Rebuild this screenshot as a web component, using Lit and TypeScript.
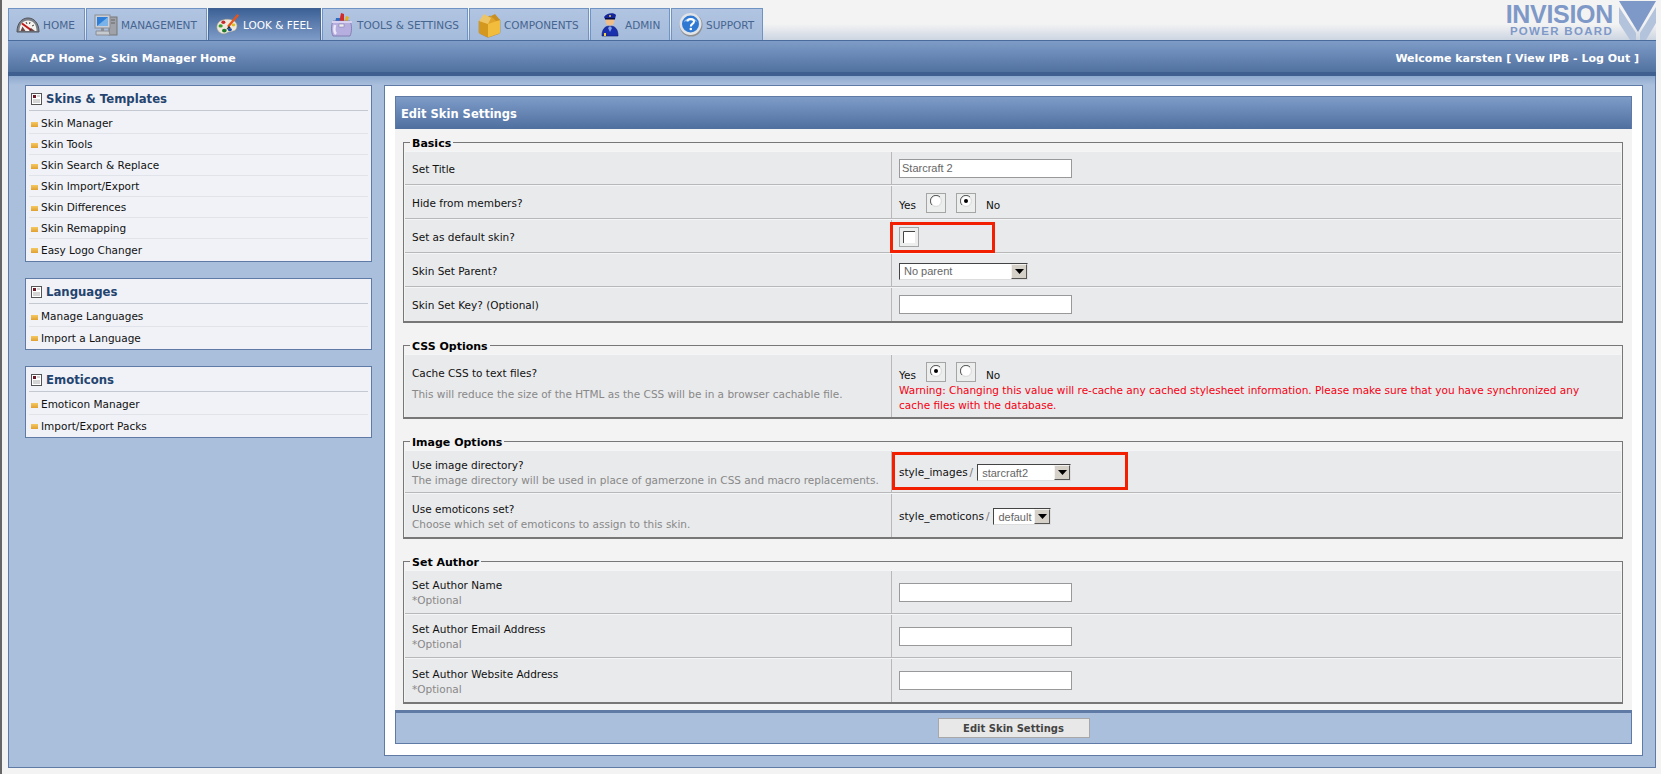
import { LitElement, html, css, svg } from "lit";
import { customElement } from "lit/decorators.js";

const ICONS: Record<string, unknown> = {
  home: svg`<svg width="24" height="24" viewBox="0 0 24 24">
    <path d="M1 19 C1 10 6 5 12 5 C18 5 23 10 23 19 Z" fill="#7d818a" stroke="#50535b"/>
    <path d="M3.500 18 C3.500 11 7 7.500 12 7.500 C17 7.500 20.500 11 20.500 18 Z" fill="#f6f3ee"/>
    <path d="M6 10.500 L15 17" stroke="#c01818" stroke-width="2"/>
    <path d="M10 9 L11 11 M14 9 L13.500 11 M18 12 L16 13" stroke="#444" stroke-width="1"/>
    <path d="M13 18 L15 15 L19 18 Z M4.500 18 L6.500 13.500 L9.500 18 Z" fill="#4a2024" opacity=".8"/>
  </svg>`,
  management: svg`<svg width="24" height="24" viewBox="0 0 24 24">
    <rect x="15" y="4" width="8" height="18" fill="#9fa2a9" stroke="#777"/>
    <path d="M17 7 H21 M17 10 H21" stroke="#666"/>
    <rect x="1" y="2" width="15" height="13" fill="#ccd0d6" stroke="#8a8d94"/>
    <rect x="3" y="4" width="11" height="9" fill="#2f7ed8"/>
    <path d="M3 13 L14 4 V13 Z" fill="#79b3ea"/>
    <path d="M2 18 H15 L16 22 H2 Z" fill="#c6c9ce" stroke="#8a8d94"/>
    <rect x="7" y="15" width="3" height="3" fill="#8a8d94"/>
  </svg>`,
  look: svg`<svg width="26" height="26" viewBox="0 0 26 26">
    <path d="M1 14 C2 8 9 6 15 7 C22 8 24 13 22 17 C20 21 14 19 11 22 C7 24 0 20 1 14 Z" fill="#efe9dd" stroke="#a49c8a" stroke-width=".6"/>
    <ellipse cx="5" cy="14" rx="2.300" ry="1.800" fill="#3a9a2a"/>
    <ellipse cx="9" cy="19" rx="2.500" ry="2" fill="#1d7a2c"/>
    <ellipse cx="15" cy="18" rx="2.300" ry="1.800" fill="#1b4ea8"/>
    <ellipse cx="19" cy="13" rx="2" ry="1.600" fill="#d9c02a"/>
    <ellipse cx="8" cy="10" rx="2.200" ry="1.800" fill="#c9282a"/>
    <path d="M13 15 L24 2" stroke="#e8531a" stroke-width="2.500"/>
    <path d="M11 18 L14 14 L16 16 Z" fill="#233"/>
  </svg>`,
  tools: svg`<svg width="24" height="26" viewBox="0 0 24 26">
    <path d="M9 11 L11 1 L14 2 L14 11 Z" fill="#d12a2a"/>
    <path d="M14 11 L16 4 L19 5 L17 11 Z" fill="#e2b31f"/>
    <path d="M5 11 L6 6 H10 V11 Z" fill="#2f6bc0"/>
    <path d="M3 9 C1 13 1 20 3 24 H20 C22 20 22 13 20 9 Z" fill="#b7aee0" stroke="#7a72a8" stroke-width=".8"/>
    <path d="M2 10 H22" stroke="#d8d2f0" stroke-width="2"/>
    <path d="M5 13 C4 17 4 20 6 22" stroke="#ece8f8" stroke-width="2.500" fill="none"/>
    <rect x="9" y="12" width="5" height="3" fill="#eee" stroke="#7a72a8" stroke-width=".5"/>
  </svg>`,
  components: svg`<svg width="24" height="26" viewBox="0 0 24 26">
    <path d="M2 9 L13 4 L23 8 V20 Q23 21 22 21.500 L12 25 Q11 25.500 10 25 L3 21.500 Q2 21 2 20 Z" fill="#e0a42a" stroke="#a87818" stroke-width=".5"/>
    <path d="M11 12 L23 8 V20 Q23 21 22 21.500 L12 25 L11 25 Z" fill="#f2bd3c"/>
    <path d="M2 9 L11 12 V25 L3 21.500 Q2 21 2 20 Z" fill="#d4981f"/>
    <path d="M2 9 L7 2 L14 6 L11 12 Z" fill="#edc566"/>
    <path d="M14 4 L18 2 L23 8 L19 9 Z" fill="#c98f20"/>
  </svg>`,
  admin: svg`<svg width="20" height="25" viewBox="0 0 20 25">
    <path d="M2 24 C2 17 5 14 10 14 C15 14 18 17 18 24 Z" fill="#1a2fae" stroke="#0c1868" stroke-width=".6"/>
    <circle cx="10" cy="9" r="4.500" fill="#eebd8c"/>
    <path d="M10 14 L8 16 L10 20 L12 16 Z" fill="#7fa0e8"/>
    <path d="M4 5 C6 1 14 0 16 3 L15 7 H5 Z" fill="#16249a"/>
    <rect x="5" y="6" width="10" height="1.500" fill="#050a40"/>
    <circle cx="10" cy="4" r="1" fill="#f0d040"/>
    <rect x="4" y="21" width="2" height="3" fill="#f0d040"/>
  </svg>`,
  support: svg`<svg width="24" height="25" viewBox="0 0 24 25">
    <circle cx="12" cy="13" r="11.500" fill="#8f8f8f"/>
    <circle cx="11.500" cy="12" r="11" fill="#e0e4e8"/>
    <circle cx="11.500" cy="12" r="8.500" fill="#2f79d2"/>
    <path d="M5 10 C6 5 17 5 18 10 C14 8 9 8 5 10 Z" fill="#8abcf0"/>
    <path d="M8.500 9.500 C8.500 6 15 6 15 9.500 C15 12 11.800 11.800 11.800 14.500" fill="none" stroke="#fff" stroke-width="2"/>
    <circle cx="11.800" cy="17" r="1.300" fill="#fff"/>
  </svg>`,
};

const TABS = [
  { key: "home", label: "HOME", width: 77 },
  { key: "management", label: "MANAGEMENT", width: 121 },
  { key: "look", label: "LOOK & FEEL", width: 113, active: true },
  { key: "tools", label: "TOOLS & SETTINGS", width: 146 },
  { key: "components", label: "COMPONENTS", width: 120 },
  { key: "admin", label: "ADMIN", width: 80 },
  { key: "support", label: "SUPPORT", width: 92 },
];

const MENU = [
  { title: "Skins & Templates", items: ["Skin Manager", "Skin Tools", "Skin Search & Replace", "Skin Import/Export", "Skin Differences", "Skin Remapping", "Easy Logo Changer"] },
  { title: "Languages", items: ["Manage Languages", "Import a Language"] },
  { title: "Emoticons", items: ["Emoticon Manager", "Import/Export Packs"] },
];

@customElement("app-root")
export class AppRoot extends LitElement {
  static styles = css`
    :host {
      display: block;
      box-sizing: border-box;
      height: 774px;
      background: #f3f3f3;
      border-left: 2px solid #666;
      padding: 8px 5px 0 6px;
      font-family: "DejaVu Sans", Verdana, sans-serif;
      font-size: 10.5px;
      color: #111;
      overflow: hidden;
    }
    * { box-sizing: border-box; }

    .top {
      display: flex;
      justify-content: space-between;
      height: 33px;
      border-bottom: 1px solid #4a6c9c;
      background: linear-gradient(#f3f3f3 50%, #ccd5e2);
    }
    .tabs { display: flex; gap: 1px; }
    .tab {
      display: flex;
      align-items: center;
      gap: 3px;
      height: 32px;
      padding-left: 7px;
      font-size: 10.5px;
      color: #46658f;
      background: linear-gradient(#b1c5e2, #a5bbdb);
      border: 1px solid #6f93c2;
      border-bottom: 0;
      white-space: nowrap;
    }
    .tab.active {
      color: #fff;
      background: linear-gradient(#3f6398, #7f9cc8);
      border-color: #4a6c9c;
      border-top: 2px solid #3d5f92;
    }
    .tab-icon { display: flex; align-items: center; justify-content: center; width: 24px; flex: none; }

    .logo { display: flex; height: 32px; margin-top: -8px; gap: 6px; }
    .logo-text { display: flex; flex-direction: column; align-items: flex-end; font-family: "Liberation Sans", Arial, sans-serif; font-weight: 700; color: #7e99c8; }
    .logo-big { font-size: 25px; line-height: 29px; letter-spacing: -.3px; }
    .logo-small { font-size: 11.500px; line-height: 13px; letter-spacing: 1.3px; margin-top: -3.600px; }
    .logo svg { display: block; margin-top: 1px; }

    .bar {
      display: flex;
      justify-content: space-between;
      align-items: center;
      height: 35px;
      padding: 0 17px 0 22px;
      background: linear-gradient(#7f9cc8, #51719f 88%, #3f5f90 88%, #3f5f90);
      color: #fff;
      font-weight: 700;
      font-size: 11px;
    }

    .content {
      display: grid;
      grid-template-columns: 347px 1fr;
      gap: 12px;
      align-items: start;
      padding: 9px 12px 12px 16px;
      height: 692px;
      background: linear-gradient(#8ea9cf, #aabfdc 9px);
      border: 1px solid #5f7ba5;
      border-top: 0;
    }

    .side { display: flex; flex-direction: column; gap: 16px; }
    .box { background: #f0f2f7; border: 1px solid #5f7ba5; padding: 0 3px 1px; }
    .box-title {
      display: flex;
      align-items: center;
      gap: 4px;
      height: 25px;
      margin-bottom: 2px;
      padding: 2px 0 0 2px;
      border-bottom: 1px solid #c4c8d0;
      font-weight: 700;
      font-size: 11.7px;
      color: #24446f;
    }
    .box-item {
      display: flex;
      align-items: center;
      gap: 3px;
      height: 21px;
      padding-left: 2px;
      border-bottom: 1px solid #e0e3e9;
      color: #111;
    }
    .box-item:last-child { border-bottom: 0; }
    .bullet { width: 7px; height: 5px; margin-top: 2px; background: linear-gradient(#f4c860, #e0a030); }

    .main { background: #fff; border: 1px solid #5f7ba5; height: 671px; padding: 10px; }
    .panel { background: #f3f3f3; height: 648px; display: flex; flex-direction: column; }
    .panel-head {
      flex: none;
      height: 33px;
      display: flex;
      align-items: center;
      padding: 2px 0 0 5px;
      font-size: 11.500px;
      font-weight: 700;
      color: #fff;
      background: linear-gradient(#7f9cc8, #4f6f9f);
      border: 1px solid #5f7ba5;
      border-bottom: 0;
    }
    .panel-body { flex: 1; padding: 6px 9px 0 8px; display: flex; flex-direction: column; gap: 15px; }

    fieldset {
      margin: 0;
      padding: 2px 1px 0;
      border: 1px solid #777;
      border-bottom: 2px solid #777;
      min-width: 0;
    }
    legend {
      margin-left: 5px;
      padding: 0 2px;
      height: 14px;
      line-height: 18px;
      font-weight: 700;
      font-size: 11px;
      color: #000;
    }
    .row {
      display: grid;
      grid-template-columns: 486px 1fr;
      background: #e9eaec;
      border-top: 1px solid #f4f5f6;
      border-bottom: 1px solid #b8b8b8;
    }
    .row:last-child { border-bottom: 0; }
    .cell-l { padding: 2px 7px 0; display: flex; flex-direction: column; justify-content: center; line-height: 15px; }
    .cell-r { position: relative; padding: 2px 7px 0; border-left: 1px solid #b8b8b8; display: flex; flex-direction: column; justify-content: center; line-height: 15px; }
    .sub { color: #888; }
    .warn { color: #f40012; padding-right: 30px; }

    .single { height: 34px; }
    .double { height: 44px; }
    .compact { height: 43px; }
    .triple { height: 63px; }
    .triple .cell-l { padding: 0 7px 5px; }
    .triple .sub { margin-top: 6px; }
    .triple .cell-r { padding-top: 3px; }

    input[type="text"] {
      display: block;
      width: 173px;
      height: 19px;
      padding: 0 2px;
      margin: -2px 0 0;
      border: 1px solid #999;
      background: #fff;
      font: 11px "Liberation Sans", Arial, sans-serif;
      color: #666;
      outline: none;
    }
    .line { display: flex; align-items: center; }
    .word { padding-top: 5px; }
    .yes { margin-right: 10px; }
    .toggle { display: flex; align-items: center; justify-content: center; width: 20px; height: 20px; margin-top: -1px; border: 1px solid #a5a5a5; background: #eceded; margin-right: 10px; padding-bottom: 3px; }
    .toggle.check { margin-right: 0; padding-bottom: 0; }
    .toggle svg { display: block; }

    .select { position: relative; display: block; height: 17px; border: 1px solid; border-color: #444 #ddd #ddd #444; background: #fff; }
    .select select {
      display: block;
      appearance: none;
      width: 100%;
      height: 15px;
      border: 0;
      padding: 0 0 0 4px;
      background: #fff;
      font: 11px "Liberation Sans", Arial, sans-serif;
      color: #666;
    }
    .arrow {
      position: absolute;
      right: 0;
      top: 0;
      width: 16px;
      height: 15px;
      display: flex;
      align-items: center;
      justify-content: center;
      background: #d5d1c8;
      border: 1px solid;
      border-color: #f4f3ef #555 #555 #f4f3ef;
    }
    .sel-129 { width: 129px; }
    .sel-95 { width: 94px; }
    .sel-56 { width: 58px; }
    .slash { color: #777; margin: 0 4px 0 2px; }

    .mark { position: absolute; border: 3px solid #f22000; pointer-events: none; }
    .mark-a { left: -2px; top: 2px; width: 105px; height: 31px; }
    .mark-b { left: 0; top: 1px; width: 236px; height: 38px; }

    .foot {
      flex: none;
      height: 34px;
      display: flex;
      align-items: center;
      justify-content: center;
      background: #aabfdc;
      border: 1px solid #5f7ba5;
      border-top: 3px solid #5f7ba5;
      margin-top: auto;
    }
    button {
      width: 152px;
      height: 20px;
      padding: 0;
      background: #e8e8e8;
      border: 1px solid #a8a8a8;
      font: 700 10px "DejaVu Sans", Verdana, sans-serif;
      color: #444;
    }
  `;

  private radio(on: boolean) {
    return html`<span class="toggle"><svg width="12" height="12" viewBox="0 0 12 12">
      <circle cx="6" cy="6" r="4.500" fill="#fff"/>
      <path d="M10 2 A5.500 5.500 0 1 0 2 10" fill="none" stroke="#555"/>
      <path d="M2 10 A5.500 5.500 0 0 0 10 2" fill="none" stroke="#ddd"/>
      ${on ? svg`<circle cx="6" cy="6" r="2" fill="#000"/>` : ""}
    </svg></span>`;
  }

  private yesNo(yes: boolean) {
    return html`<div class="line"><span class="word yes">Yes</span>${this.radio(yes)}${this.radio(!yes)}<span class="word">No</span></div>`;
  }

  private sel(value: string, cls: string) {
    return html`<span class=${"select " + cls}><select><option>${value}</option></select><span class="arrow"><svg width="9" height="5" viewBox="0 0 9 5"><path d="M0 0 H9 L4.500 5 Z" fill="#000"/></svg></span></span>`;
  }

  private row(label: string, sub: string, right: unknown, size: string) {
    return html`<div class=${"row " + size}>
      <div class="cell-l"><div>${label}</div>${sub ? html`<div class="sub">${sub}</div>` : ""}</div>
      <div class="cell-r">${right}</div>
    </div>`;
  }

  private text(v = "") {
    return html`<input type="text" .value=${v} />`;
  }

  render() {
    return html`
      <div class="top">
        <div class="tabs">
          ${TABS.map((t) => html`<div class=${t.active ? "tab active" : "tab"} style=${`width:${t.width}px`}><span class="tab-icon">${ICONS[t.key]}</span><span>${t.label}</span></div>`)}
        </div>
        <div class="logo">
          <div class="logo-text"><span class="logo-big">INVISION</span><span class="logo-small">POWER BOARD</span></div>
          <svg width="37" height="39" viewBox="0 0 37 39">
            <path d="M0 0 H37 L19 31 Z" fill="#7e99c8"/>
            <path d="M0 6 L17 32 V39 H11 L0 22 Z M37 6 L21 32 V39 H27 L37 22 Z" fill="#b4c3dc"/>
          </svg>
        </div>
      </div>
      <div class="bar">
        <span>ACP Home &gt; Skin Manager Home</span>
        <span>Welcome karsten [ View IPB - Log Out ]</span>
      </div>
      <div class="content">
        <div class="side">
          ${MENU.map((m) => html`<div class="box">
            <div class="box-title">
              <svg width="11" height="12" viewBox="0 0 11 12"><rect x=".5" y=".5" width="10" height="11" fill="#fff" stroke="#555"/><rect x="2" y="2" width="3" height="3" fill="#701828"/><path d="M6 3 H9 M2 7 H9 M2 9 H9" stroke="#aaa"/></svg>
              <span>${m.title}</span>
            </div>
            ${m.items.map((i) => html`<div class="box-item"><span class="bullet"></span><span>${i}</span></div>`)}
          </div>`)}
        </div>
        <div class="main">
          <div class="panel">
            <div class="panel-head">Edit Skin Settings</div>
            <div class="panel-body">
              <fieldset>
                <legend>Basics</legend>
                ${this.row("Set Title", "", this.text("Starcraft 2"), "single")}
                ${this.row("Hide from members?", "", this.yesNo(false), "single")}
                ${this.row("Set as default skin?", "", html`<span class="toggle check"><svg width="12" height="12" viewBox="0 0 12 12"><rect width="12" height="12" fill="#fff"/><path d="M.5 12 V.5 H12" fill="none" stroke="#444"/></svg></span><span class="mark mark-a"></span>`, "single")}
                ${this.row("Skin Set Parent?", "", this.sel("No parent", "sel-129"), "single")}
                ${this.row("Skin Set Key? (Optional)", "", this.text(), "single")}
              </fieldset>
              <fieldset>
                <legend>CSS Options</legend>
                ${this.row("Cache CSS to text files?", "This will reduce the size of the HTML as the CSS will be in a browser cachable file.", html`${this.yesNo(true)}<div class="warn">Warning: Changing this value will re-cache any cached stylesheet information. Please make sure that you have synchronized any cache files with the database.</div>`, "triple")}
              </fieldset>
              <fieldset>
                <legend>Image Options</legend>
                ${this.row("Use image directory?", "The image directory will be used in place of gamerzone in CSS and macro replacements.", html`<div class="line"><span>style_images</span><span class="slash">/</span>${this.sel("starcraft2", "sel-95")}</div><span class="mark mark-b"></span>`, "compact")}
                ${this.row("Use emoticons set?", "Choose which set of emoticons to assign to this skin.", html`<div class="line"><span>style_emoticons</span><span class="slash">/</span>${this.sel("default", "sel-56")}</div>`, "double")}
              </fieldset>
              <fieldset>
                <legend>Set Author</legend>
                ${this.row("Set Author Name", "*Optional", this.text(), "double")}
                ${this.row("Set Author Email Address", "*Optional", this.text(), "double")}
                ${this.row("Set Author Website Address", "*Optional", this.text(), "double")}
              </fieldset>
            </div>
            <div class="foot"><button>Edit Skin Settings</button></div>
          </div>
        </div>
      </div>
    `;
  }
}
